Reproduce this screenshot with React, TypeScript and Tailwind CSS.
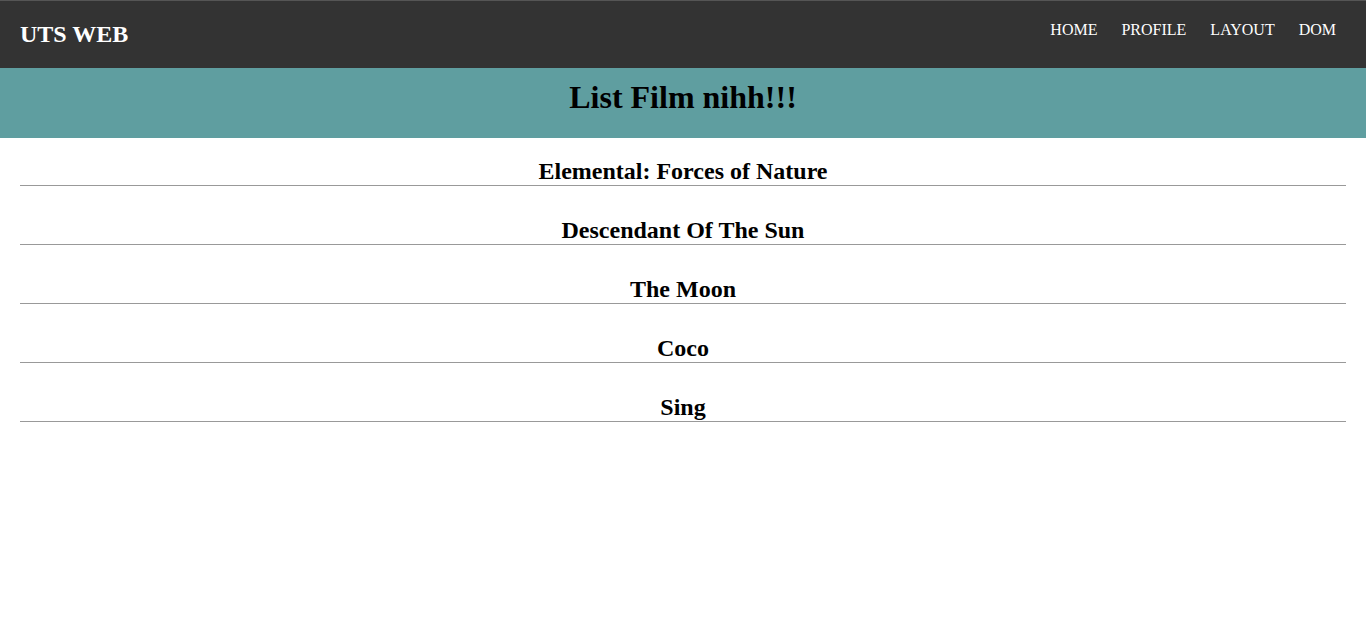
const films = [
  "Elemental: Forces of Nature",
  "Descendant Of The Sun",
  "The Moon",
  "Coco",
  "Sing",
];

const menu = ["HOME", "PROFILE", "LAYOUT", "DOM"];

export default function App() {
  return (
    <div className="min-h-[640px] bg-white font-['Liberation_Serif','Times_New_Roman',serif]">
      <header className="flex h-[68px] items-center justify-between border-t border-[#555] bg-[#333] pl-5 pr-[30px]">
        <h1 className="-mt-[2px] text-[24px] font-bold text-white">UTS WEB</h1>
        <nav className="-mt-[10px] flex items-center gap-6 text-[16px] text-white">
          {menu.map((m) => (
            <a key={m} href="#">
              {m}
            </a>
          ))}
        </nav>
      </header>

      <div className="flex h-[70px] justify-center bg-[#5f9ea0] pt-[10px]">
        <h2 className="text-[32px] font-bold leading-[38px] text-black">List Film nihh!!!</h2>
      </div>

      <ul className="mx-5">
        {films.map((f, i) => (
          <li
            key={f}
            className={`border-b border-[#999] text-center text-[24px] font-bold leading-[28px] text-black ${
              i === 0 ? "pt-[19px]" : "pt-[30px]"
            }`}
          >
            {f}
          </li>
        ))}
      </ul>
    </div>
  );
}
